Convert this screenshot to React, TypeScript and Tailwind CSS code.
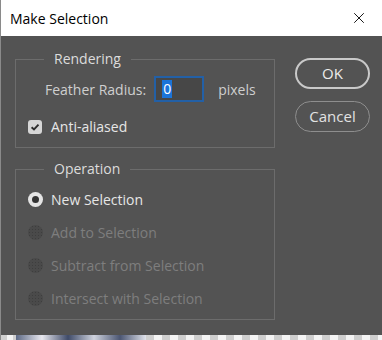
import { X } from "lucide-react";

const font = { fontFamily: '"Open Sans", "Noto Sans", sans-serif' };

const Radio = ({ label, checked, disabled }: { label: string; checked?: boolean; disabled?: boolean }) => (
  <div className="flex items-center h-[20px]">
    {disabled ? (
      <span className="w-[15px] h-[15px] rounded-full bg-[#4a4a4a] bg-[radial-gradient(#3e3e3e_35%,transparent_40%)] bg-[length:3px_3px]" />
    ) : (
      <span className="w-[15px] h-[15px] rounded-full bg-[#e4e4e4] flex items-center justify-center">
        <span className="w-[7px] h-[7px] rounded-full bg-[#333]" />
      </span>
    )}
    <span className={"ml-[8px] text-[14px] " + (disabled ? "text-[#7e7e7e]" : "text-[#e6e6e6]")}>{label}</span>
  </div>
);

export default function App() {
  return (
    <div className="w-[382px] h-[340px] flex flex-col bg-[#535353] border-l border-[#8a8a8a]" style={font}>
      {/* title bar */}
      <div className="h-[36px] bg-white flex items-center justify-between pl-[9px] pr-[14px]">
        <span className="text-[14px] text-black">Make Selection</span>
        <X size={18} strokeWidth={1.2} className="text-black" />
      </div>

      <div className="flex-1 flex pt-[13px] pl-[14px]">
        {/* left column */}
        <div className="w-[260px] flex flex-col gap-[11px]">
          <fieldset className="border border-[#6c6c6c] px-[12px] pb-[11px] h-[99px]">
            <legend className="ml-[16px] px-[10px] text-[14px] text-[#dcdcdc] leading-[20px]">Rendering</legend>
            <div className="flex items-center mt-[7px] pl-[17px]">
              <span className="text-[14px] text-[#cfcfcf]">Feather Radius:</span>
              <div className="ml-[8px] w-[50px] h-[26px] border-2 border-[#2360a6] bg-[#474747] flex items-center pl-[6px]">
                <span className="bg-[#1b74d8] text-white text-[14px] leading-[18px] px-[1px]">0</span>
              </div>
              <span className="ml-[14px] text-[14px] text-[#cfcfcf]">pixels</span>
            </div>
            <div className="flex items-center mt-[14px]">
              <span className="w-[14px] h-[14px] rounded-[3px] bg-[#d6d6d6] flex items-center justify-center">
                <svg width="10" height="10" viewBox="0 0 10 10">
                  <path d="M1.6 5.2 L4 7.5 L8.5 2.6" fill="none" stroke="#2e2e2e" strokeWidth="1.9" />
                </svg>
              </span>
              <span className="ml-[9px] text-[14px] text-[#e6e6e6]">Anti-aliased</span>
            </div>
          </fieldset>

          <fieldset className="border border-[#6c6c6c] px-[12px] h-[161px]">
            <legend className="ml-[16px] px-[10px] text-[14px] text-[#dcdcdc] leading-[20px]">Operation</legend>
            <div className="flex flex-col gap-[13px] mt-[10px]">
              <Radio label="New Selection" checked />
              <Radio label="Add to Selection" disabled />
              <Radio label="Subtract from Selection" disabled />
              <Radio label="Intersect with Selection" disabled />
            </div>
          </fieldset>
        </div>

        {/* buttons */}
        <div className="ml-[20px] flex flex-col gap-[12px] pt-[9px]">
          <button className="w-[75px] h-[31px] rounded-full border-2 border-[#c9c9c9] text-[15px] text-[#ececec]">OK</button>
          <button className="w-[75px] h-[31px] rounded-full border border-[#8e8e8e] text-[15px] text-[#e2e2e2]">Cancel</button>
        </div>
      </div>

      {/* canvas strip beneath the dialog */}
      <div className="h-[5px] flex">
        <div className="w-[15px] bg-[repeating-linear-gradient(90deg,#cfcfcf_0_6px,#f2f2f2_6px_12px)]" />
        <div className="w-[130px] bg-[linear-gradient(90deg,#5d6a86,#e8e8ef_20%,#3f4b69_40%,#cfd3de_60%,#4b5673_80%,#dfe2ea)]" />
        <div className="flex-1 bg-[repeating-linear-gradient(90deg,#cfcfcf_0_8px,#f4f4f4_8px_16px)]" />
      </div>
    </div>
  );
}
